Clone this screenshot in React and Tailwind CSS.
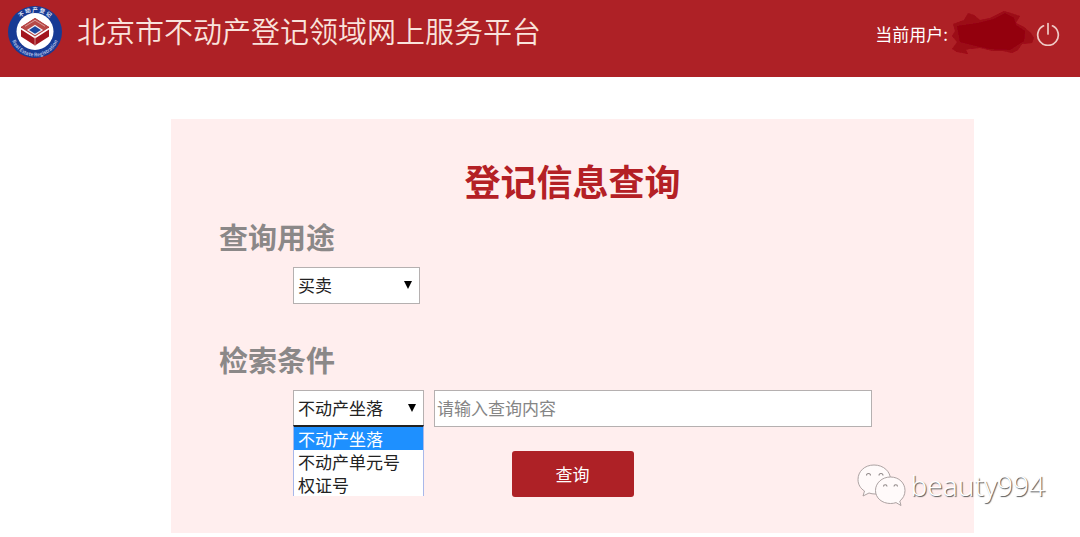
import { useState } from 'react';

const PURPOSES = ['买卖', '抵押', '租赁'];
const CONDITIONS = ['不动产坐落', '不动产单元号', '权证号'];

const Logo = () => (
  <svg viewBox="0 0 56 56" className="h-14 w-14 flex-shrink-0" aria-hidden="true">
    <defs>
      <path id="ring-top" d="M7.5 28 A20.5 20.5 0 0 1 48.5 28" />
      <path id="ring-bottom" d="M3.5 28 A24.5 24.5 0 0 0 52.5 28" />
    </defs>
    <ellipse cx="28" cy="28" rx="27" ry="26" fill="#173a94" />
    <circle cx="28" cy="27.5" r="18.5" fill="#fff" />
    <text fill="#e4e9f6" fontSize="5.5" fontWeight="700" textAnchor="middle">
      <textPath href="#ring-top" startOffset="50%">不  动  产  登  记</textPath>
    </text>
    <text fill="#a9b9e2" fontSize="5" fontWeight="700" textAnchor="middle">
      <textPath href="#ring-bottom" startOffset="50%">Real Estate Registration</textPath>
    </text>
    <path d="M28 14 L42 23 V32.500 L28 41.500 L14 32.500 V23 Z" fill="#a3161f" />
    <path d="M28 14 L42 23 L28 32.500 L14 23 Z" fill="#b84a48" />
    <path d="M18 22.300 L28 16.300 L38 22.300" fill="none" stroke="#e3b3b0" strokeWidth="0.8" />
    <path d="M14 24.500 L28 33.500 L42 24.500" fill="none" stroke="#fff" strokeWidth="1.500" />
    <path d="M28 33 V42" stroke="#dba9a7" strokeWidth="0.8" />
    <path d="M28 21.500 L35 26 L28 30.500 L21 26 Z" fill="#1d469f" stroke="#f1f1f7" strokeWidth="1.200" />
  </svg>
);

const PowerIcon = () => (
  <svg viewBox="0 0 24 24" className="h-6 w-6" fill="none" stroke="#efc9c5" strokeWidth="1.7" strokeLinecap="round">
    <path d="M7.500 3.800 A10.300 10.300 0 1 0 16.500 3.800" />
    <path d="M12 1.500 V12" />
  </svg>
);

const Smudge = () => (
  <svg viewBox="0 0 86 48" className="h-12 w-[86px]" aria-hidden="true">
    <defs>
      <filter id="soft">
        <feGaussianBlur stdDeviation="0.7" />
      </filter>
    </defs>
    <g filter="url(#soft)">
      <path
        d="M3 14 L14 10 L18 3 L24 5 L30 10 L40 8 L54 1 L61 3 L70 6 L66 13 L74 17 L81 23 L84 28 L82 33 L72 34 L68 40 L62 43 L53 41 L43 41 L30 38 L19 39 L16 40 L18 44 L7 42 L2 39 L7 32 L2 26 L5 21 Z"
        fill="#9c0917"
      />
      <path d="M7 16 L28 13 L44 9 L55 3 L64 8 L66 15 L75 21 L74 31 L60 40 L40 39 L26 36 L10 32 Z" fill="#930011" />
    </g>
  </svg>
);

const WechatMark = () => (
  <svg viewBox="0 0 50 44" className="h-11 w-[50px]" aria-hidden="true">
    <g fill="#fffafa" stroke="#a39898" strokeWidth="0.9" strokeLinejoin="round">
      <path d="M18 2 C8.500 2 2 8.500 2 16.500 C2 21.500 4.500 25.500 8.500 28 L7 33 L13 30 C15 30.700 17 31 19 31 C28 31 34.500 24.500 34.500 16.500 C34.500 8.500 27.500 2 18 2 Z" />
      <path d="M34.500 14 C26 14 19.500 20 19.500 27.500 C19.500 35 26 40.500 34.500 40.500 C36.500 40.500 38.500 40.200 40 39.600 L45 42.500 L43.800 38 C47 35.600 49 32 49 27.500 C49 20 43 14 34.500 14 Z" />
    </g>
    <g fill="none" stroke="#8f8787" strokeWidth="1.1">
      <path d="M10.500 12.500 A2 2 0 1 1 14.500 12.500 M23 12.500 A2 2 0 1 1 27 12.500" />
      <path d="M27.500 23.500 A1.700 1.700 0 1 1 31 23.500 M38 23.500 A1.700 1.700 0 1 1 41.500 23.500" />
    </g>
  </svg>
);

const SelectBox = ({ id, label, value, onChange, options, className }) => (
  <div className={`relative ${className}`}>
    <select
      id={id}
      aria-label={label}
      value={value}
      onChange={(e) => onChange(e.target.value)}
      className="block h-[37px] w-full appearance-none border border-[#b5b0b0] bg-white pb-0.5 pl-1 pr-5 text-[17px] text-[#222] outline-none"
    >
      {options.map((o) => (
        <option key={o}>{o}</option>
      ))}
    </select>
    <svg viewBox="0 0 8 8" className="pointer-events-none absolute right-2 top-[14px] h-2 w-2" aria-hidden="true">
      <path d="M0 0 H8 L4 8 Z" fill="#000" />
    </svg>
  </div>
);

const App = () => {
  const [purpose, setPurpose] = useState(PURPOSES[0]);
  const [condition, setCondition] = useState(CONDITIONS[0]);
  const [open, setOpen] = useState(true);
  const [keyword, setKeyword] = useState('');

  const pick = (value) => {
    setCondition(value);
    setOpen(false);
  };

  return (
    <div className="relative bg-white font-['Noto_Sans_CJK_SC',sans-serif]">
      <header className="flex h-[77px] items-start justify-between bg-[#ae2126] pl-[7px] pr-5">
        <div className="flex items-center gap-[14px] pt-1">
          <Logo />
          <h1 className="pb-1 text-[29px] font-[350] leading-[52px] text-[#f9e3dc]">北京市不动产登记领域网上服务平台</h1>
        </div>
        <div className="flex items-center pt-[10px] text-[17px] text-white">
          <span className="pr-0.5">当前用户:</span>
          <Smudge />
          <button type="button" title="退出" className="cursor-pointer">
            <PowerIcon />
          </button>
        </div>
      </header>

      <main className="pl-[171px] pr-[106px] pt-[42px]">
        <form onSubmit={(e) => e.preventDefault()} className="bg-[#ffeeee] px-12 py-9">
          <h2 className="text-center text-[36px] font-bold leading-[50px] text-[#b42025]">登记信息查询</h2>

          <label htmlFor="purpose" className="mt-2 block text-[29px] font-bold leading-[46px] text-[#8b8888]">
            查询用途
          </label>
          <SelectBox
            id="purpose"
            label="查询用途"
            value={purpose}
            onChange={setPurpose}
            options={PURPOSES}
            className="ml-[74px] mt-2 w-[127px]"
          />

          <label htmlFor="condition" className="mt-8 block text-[29px] font-bold leading-[46px] text-[#8b8888]">
            检索条件
          </label>
          <div className="ml-[74px] mr-[54px] mt-2 flex gap-[10px]">
            <div className="relative w-[131px]">
              <SelectBox
                id="condition"
                label="检索条件"
                value={condition}
                onChange={setCondition}
                options={CONDITIONS}
                className="w-full"
              />
              {open && (
                <ul
                  role="listbox"
                  aria-label="检索条件"
                  className="absolute left-0 top-[35px] w-full border-x border-t-2 border-x-[#a9b8ea] border-t-[#222] bg-white text-[17px] leading-[23px] text-[#222]"
                >
                  {CONDITIONS.map((o) => (
                    <li
                      key={o}
                      role="option"
                      aria-selected={o === condition}
                      onClick={() => pick(o)}
                      className={`cursor-default pl-1 ${o === condition ? 'bg-[#1e90ff] text-white' : ''}`}
                    >
                      {o}
                    </li>
                  ))}
                </ul>
              )}
            </div>
            <input
              type="text"
              aria-label="查询内容"
              value={keyword}
              onChange={(e) => setKeyword(e.target.value)}
              placeholder="请输入查询内容"
              className="h-[37px] min-w-0 flex-1 border border-[#b5b0b0] bg-white px-0.5 pb-0.5 text-[17px] text-[#222] outline-none placeholder:text-[#858585]"
            />
          </div>

          <button
            type="submit"
            className="mx-auto mt-6 block h-[46px] w-[122px] rounded-[3px] bg-[#ae2126] text-[17px] text-white"
          >
            查询
          </button>
        </form>
      </main>

      <div className="pointer-events-none absolute bottom-[26px] right-[35px] flex items-center gap-1">
        <WechatMark />
        <span className="font-['Noto_Sans',sans-serif] text-[28px] font-light leading-11 text-white [text-shadow:1px_1px_1px_#555]">
          beauty994
        </span>
      </div>
    </div>
  );
};

export default App;
